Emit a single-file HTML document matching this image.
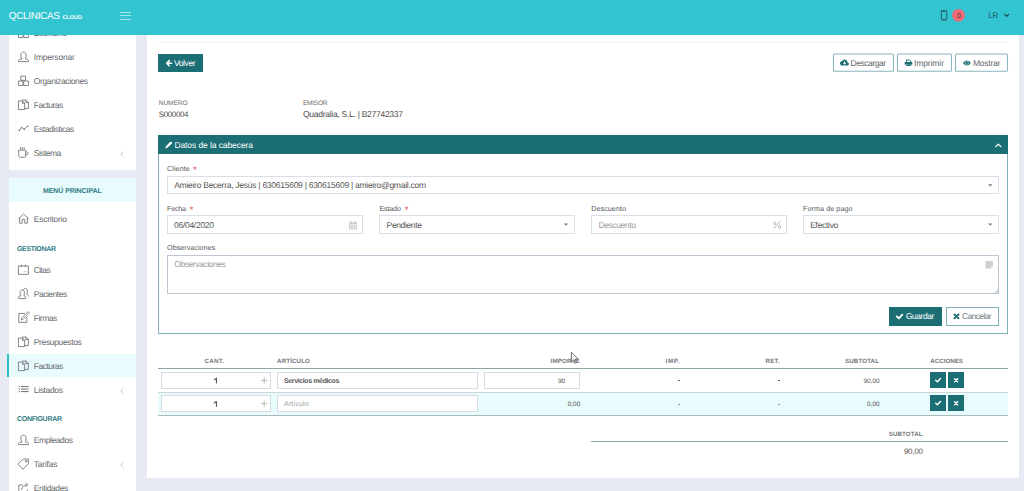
<!DOCTYPE html><html><head><meta charset="utf-8"><style>
html,body{margin:0;padding:0;width:1024px;height:491px;overflow:hidden;background:#e7eaf2;font-family:"Liberation Sans",sans-serif}
.t{position:absolute;line-height:1;white-space:nowrap;text-rendering:geometricPrecision}
.b{position:absolute;display:block}
</style></head><body>
<div class="b" style="left:147px;top:35px;width:872px;height:442.5px;background:#fff"></div>
<div class="b" style="left:9px;top:35px;width:127px;height:135px;background:#fff"></div>
<div class="b" style="left:9px;top:178px;width:127px;height:313px;background:#fff"></div>
<div class="b" style="left:9px;top:178px;width:127px;height:24px;background:#e8fbfd"></div>
<div class="b" style="left:9px;top:354px;width:127px;height:23px;background:#e8fbfd"></div>
<div class="b" style="left:7px;top:354px;width:2px;height:23px;background:#2fbfcc"></div>
<div class="t" style="left:33.75px;top:29.00px;font-size:8.5px;color:#66696d;letter-spacing:-0.242px;">Escritorio</div>
<div class="t" style="left:33.75px;top:53.00px;font-size:8.5px;color:#66696d;letter-spacing:-0.221px;">Impersonar</div>
<div class="t" style="left:33.75px;top:77.00px;font-size:8.5px;color:#66696d;letter-spacing:-0.370px;">Organizaciones</div>
<div class="t" style="left:33.75px;top:101.00px;font-size:8.5px;color:#66696d;letter-spacing:-0.509px;">Facturas</div>
<div class="t" style="left:33.75px;top:125.00px;font-size:8.5px;color:#66696d;letter-spacing:-0.441px;">Estadisticas</div>
<div class="t" style="left:33.75px;top:149.00px;font-size:8.5px;color:#66696d;letter-spacing:-0.535px;">Sistema</div>
<div class="t" style="left:33.75px;top:215.00px;font-size:8.5px;color:#66696d;letter-spacing:-0.242px;">Escritorio</div>
<div class="t" style="left:33.75px;top:266.00px;font-size:8.5px;color:#66696d;letter-spacing:-0.591px;">Citas</div>
<div class="t" style="left:33.75px;top:290.00px;font-size:8.5px;color:#66696d;letter-spacing:-0.479px;">Pacientes</div>
<div class="t" style="left:33.75px;top:314.00px;font-size:8.5px;color:#66696d;letter-spacing:-0.494px;">Firmas</div>
<div class="t" style="left:33.75px;top:338.00px;font-size:8.5px;color:#66696d;letter-spacing:-0.362px;">Presupuestos</div>
<div class="t" style="left:33.75px;top:362.00px;font-size:8.5px;color:#66696d;letter-spacing:-0.509px;">Facturas</div>
<div class="t" style="left:33.75px;top:386.00px;font-size:8.5px;color:#66696d;letter-spacing:-0.345px;">Listados</div>
<div class="t" style="left:33.75px;top:436.00px;font-size:8.5px;color:#66696d;letter-spacing:-0.409px;">Empleados</div>
<div class="t" style="left:33.75px;top:460.00px;font-size:8.5px;color:#66696d;letter-spacing:-0.214px;">Tarifas</div>
<div class="t" style="left:33.75px;top:484.00px;font-size:8.5px;color:#66696d;letter-spacing:-0.414px;">Entidades</div>
<div class="t" style="left:43.00px;top:188.00px;font-size:7px;color:#2c7a83;letter-spacing:-0.078px;font-weight:bold;-webkit-text-stroke:0;">MENÚ PRINCIPAL</div>
<div class="t" style="left:17.00px;top:246.00px;font-size:7px;color:#2c7a83;letter-spacing:-0.327px;font-weight:bold;-webkit-text-stroke:0;">GESTIONAR</div>
<div class="t" style="left:17.00px;top:416.00px;font-size:7px;color:#2c7a83;letter-spacing:-0.271px;font-weight:bold;-webkit-text-stroke:0;">CONFIGURAR</div>
<div class="b" style="left:0px;top:0px;width:1024px;height:35px;background:#33c4d2;z-index:5"></div>
<div class="t" style="left:8.75px;top:12.00px;font-size:10px;color:#fff;letter-spacing:-0.331px;z-index:6">QCLINICAS</div>
<div class="t" style="left:62.50px;top:16.00px;font-size:5.5px;color:#fff;letter-spacing:-0.013px;font-weight:bold;-webkit-text-stroke:0;z-index:6">CLOUD</div>
<div class="b" style="left:120px;top:11.5px;width:11px;height:1.0px;background:rgba(255,255,255,0.55);z-index:6"></div>
<div class="b" style="left:120px;top:15.0px;width:11px;height:1.0px;background:rgba(255,255,255,0.55);z-index:6"></div>
<div class="b" style="left:120px;top:18.5px;width:11px;height:1.0px;background:rgba(255,255,255,0.55);z-index:6"></div>
<div class="t" style="left:988.30px;top:12.00px;font-size:8px;color:#1f4d53;letter-spacing:0.000px;z-index:6">L</div>
<div class="t" style="left:992.60px;top:12.00px;font-size:8px;color:#1f4d53;letter-spacing:0.000px;z-index:6">R</div>
<div class="t" style="left:956.90px;top:13.00px;font-size:7px;color:#4b2d31;letter-spacing:0.000px;z-index:7">0</div>
<div class="b" style="left:158px;top:42px;width:850px;height:1px;background:#f0f2f5"></div>
<div class="b" style="left:158px;top:54px;width:45px;height:18px;background:#1c6e75"></div>
<div class="t" style="left:174.00px;top:59.00px;font-size:8.5px;color:#fff;letter-spacing:-0.404px;">Volver</div>
<svg class="b" style="left:0;top:0" width="1024" height="100" viewBox="0 0 1024 100"><rect x="833.5" y="54" width="60" height="17.3" rx="1" fill="none" stroke="#86b6ba" stroke-width="1.05"/><rect x="897.5" y="54" width="54" height="17.3" rx="1" fill="none" stroke="#86b6ba" stroke-width="1.05"/><rect x="955.5" y="54" width="52" height="17.3" rx="1" fill="none" stroke="#86b6ba" stroke-width="1.05"/></svg>
<div class="t" style="left:850.50px;top:59.00px;font-size:8.5px;color:#62666a;letter-spacing:-0.464px;">Descargar</div>
<div class="t" style="left:913.90px;top:59.00px;font-size:8.5px;color:#62666a;letter-spacing:-0.084px;">Imprimir</div>
<div class="t" style="left:972.90px;top:59.00px;font-size:8.5px;color:#62666a;letter-spacing:-0.218px;">Mostrar</div>
<div class="t" style="left:158.75px;top:101.00px;font-size:6.5px;color:#6c6c6c;letter-spacing:-0.027px;">NUMERO</div>
<div class="t" style="left:158.75px;top:111.00px;font-size:8px;color:#4e4e4e;letter-spacing:-0.380px;">S000004</div>
<div class="t" style="left:303.00px;top:101.00px;font-size:6.5px;color:#6c6c6c;letter-spacing:-0.228px;">EMISOR</div>
<div class="t" style="left:303.00px;top:110.00px;font-size:8.5px;color:#4e4e4e;letter-spacing:-0.274px;">Quadralia, S.L. | B27742337</div>
<div class="b" style="left:158px;top:135px;width:850px;height:199px;border:1px solid #7fb1b6;box-sizing:border-box;border-top:none"></div>
<div class="b" style="left:158px;top:135px;width:850px;height:19.30000000000001px;background:#1c6e75"></div>
<div class="t" style="left:174.40px;top:141.00px;font-size:8.5px;color:#fff;letter-spacing:-0.091px;">Datos de la cabecera</div>
<div class="t" style="left:167.10px;top:165.00px;font-size:7.2px;color:#555a5e;letter-spacing:0.039px;">Cliente</div>
<div class="t" style="left:193.00px;top:166.00px;font-size:9.5px;color:#e5484d;letter-spacing:0.000px;">*</div>
<div class="b" style="left:167px;top:175.5px;width:832px;height:18.5px;border:1px solid #d9dee8;box-sizing:border-box"></div>
<div class="t" style="left:174.20px;top:181.00px;font-size:8.5px;color:#555;letter-spacing:-0.264px;">Amieiro Becerra, Jesús | 630615609 | 630615609 | amieiro@gmail.com</div>
<div class="b" style="left:167px;top:215px;width:196px;height:18.5px;border:1px solid #d9dee8;box-sizing:border-box"></div>
<div class="b" style="left:379px;top:215px;width:196px;height:18.5px;border:1px solid #d9dee8;box-sizing:border-box"></div>
<div class="b" style="left:591px;top:215px;width:196px;height:18.5px;border:1px solid #d9dee8;box-sizing:border-box"></div>
<div class="b" style="left:803px;top:215px;width:196px;height:18.5px;border:1px solid #d9dee8;box-sizing:border-box"></div>
<div class="t" style="left:167.10px;top:205.00px;font-size:7.2px;color:#555a5e;letter-spacing:-0.279px;">Fecha</div>
<div class="t" style="left:189.75px;top:206.00px;font-size:9.5px;color:#e5484d;letter-spacing:0.000px;">*</div>
<div class="t" style="left:379.40px;top:205.00px;font-size:7.2px;color:#555a5e;letter-spacing:-0.163px;">Estado</div>
<div class="t" style="left:404.75px;top:206.00px;font-size:9.5px;color:#e5484d;letter-spacing:0.000px;">*</div>
<div class="t" style="left:591.30px;top:205.00px;font-size:7.2px;color:#555a5e;letter-spacing:0.035px;">Descuento</div>
<div class="t" style="left:803.00px;top:205.00px;font-size:7.2px;color:#555a5e;letter-spacing:0.064px;">Forma de pago</div>
<div class="t" style="left:174.00px;top:221.00px;font-size:8.5px;color:#555;letter-spacing:-0.282px;">06/04/2020</div>
<div class="t" style="left:386.60px;top:221.00px;font-size:8.5px;color:#555;letter-spacing:-0.373px;">Pendiente</div>
<div class="t" style="left:598.40px;top:221.00px;font-size:8.5px;color:#9a9a9a;letter-spacing:-0.392px;">Descuento</div>
<div class="t" style="left:810.25px;top:221.00px;font-size:8.5px;color:#555;letter-spacing:-0.312px;">Efectivo</div>
<div class="t" style="left:167.10px;top:244.00px;font-size:7.2px;color:#555a5e;letter-spacing:0.011px;">Observaciones</div>
<div class="b" style="left:167px;top:255px;width:832px;height:39px;border:1px solid #c0c7d4;box-sizing:border-box"></div>
<div class="t" style="left:174.25px;top:260.00px;font-size:8.5px;color:#9a9a9a;letter-spacing:-0.433px;">Observaciones</div>
<div class="b" style="left:889px;top:307px;width:53px;height:18.5px;background:#1c6e75"></div>
<div class="t" style="left:905.90px;top:312.00px;font-size:8.5px;color:#fff;letter-spacing:-0.446px;">Guardar</div>
<div class="b" style="left:946px;top:307px;width:53px;height:18.5px;border:1px solid #80b2b7;box-sizing:border-box"></div>
<div class="t" style="left:961.90px;top:312.00px;font-size:8.5px;color:#6f8186;letter-spacing:-0.617px;">Cancelar</div>
<div class="t" style="left:204.60px;top:359.00px;font-size:6.2px;color:#76797b;letter-spacing:0.287px;font-weight:bold;-webkit-text-stroke:0;">CANT.</div>
<div class="t" style="left:277.10px;top:359.00px;font-size:6.2px;color:#76797b;letter-spacing:0.124px;font-weight:bold;-webkit-text-stroke:0;">ARTÍCULO</div>
<div class="t" style="left:550.60px;top:359.00px;font-size:6.2px;color:#76797b;letter-spacing:0.150px;font-weight:bold;-webkit-text-stroke:0;">IMPORTE</div>
<div class="t" style="left:665.60px;top:359.00px;font-size:6.2px;color:#76797b;letter-spacing:0.618px;font-weight:bold;-webkit-text-stroke:0;">IMP.</div>
<div class="t" style="left:765.60px;top:359.00px;font-size:6.2px;color:#76797b;letter-spacing:0.122px;font-weight:bold;-webkit-text-stroke:0;">RET.</div>
<div class="t" style="left:845.00px;top:359.00px;font-size:6.2px;color:#76797b;letter-spacing:0.117px;font-weight:bold;-webkit-text-stroke:0;">SUBTOTAL</div>
<div class="t" style="left:930.25px;top:359.00px;font-size:6.2px;color:#76797b;letter-spacing:0.004px;font-weight:bold;-webkit-text-stroke:0;">ACCIONES</div>
<div class="b" style="left:158px;top:367.5px;width:850px;height:1.5px;background:#8fa5a6"></div>
<div class="b" style="left:161px;top:372px;width:110px;height:17px;border:1px solid #d6dbe4;box-sizing:border-box;background:#fff"></div>
<div class="b" style="left:277px;top:372px;width:201px;height:17px;border:1px solid #d6dbe4;box-sizing:border-box;background:#fff"></div>
<div class="b" style="left:484px;top:372px;width:96px;height:17px;border:1px solid #d6dbe4;box-sizing:border-box;background:#fff"></div>
<div class="b" style="left:158px;top:391.5px;width:850px;height:1.0px;background:#cfd6d6"></div>
<div class="b" style="left:158px;top:392.5px;width:850px;height:22.5px;background:#e8fcfd"></div>
<div class="b" style="left:158px;top:414.5px;width:850px;height:1.5px;background:#a9b9ba"></div>
<div class="b" style="left:161px;top:395px;width:110px;height:16.5px;border:1px solid #d6dbe4;box-sizing:border-box;background:#fff"></div>
<div class="b" style="left:277px;top:395px;width:201px;height:16.5px;border:1px solid #d6dbe4;box-sizing:border-box;background:#fff"></div>
<div class="t" style="left:284.00px;top:378.00px;font-size:7px;color:#5b5b5b;letter-spacing:-0.380px;font-weight:bold;-webkit-text-stroke:0;">Servicios médicos</div>
<div class="t" style="left:284.10px;top:400.00px;font-size:7.2px;color:#a0a0a0;letter-spacing:0.035px;">Artículo</div>
<div class="t" style="left:557.90px;top:379.00px;font-size:6.47px;color:#555;letter-spacing:0.000px;">90</div>
<div class="t" style="left:567.70px;top:402.00px;font-size:6.47px;color:#555;letter-spacing:0.000px;">0,00</div>
<div class="b" style="left:677.5px;top:380px;width:2.5px;height:1px;background:#666"></div>
<div class="b" style="left:777.5px;top:380px;width:2.5px;height:1px;background:#666"></div>
<div class="b" style="left:677.5px;top:403.5px;width:2.5px;height:1.0px;background:#8a8a8a"></div>
<div class="b" style="left:777.5px;top:403.5px;width:2.5px;height:1.0px;background:#8a8a8a"></div>
<div class="t" style="left:863.40px;top:379.00px;font-size:6.51px;color:#555;letter-spacing:0.000px;">90,00</div>
<div class="t" style="left:867.10px;top:402.00px;font-size:6.47px;color:#555;letter-spacing:0.000px;">0,00</div>
<div class="b" style="left:930px;top:372px;width:16px;height:16px;background:#1c6e75"></div>
<div class="b" style="left:948px;top:372px;width:16px;height:16px;background:#1c6e75"></div>
<div class="b" style="left:930px;top:395px;width:16px;height:16px;background:#1c6e75"></div>
<div class="b" style="left:948px;top:395px;width:16px;height:16px;background:#1c6e75"></div>
<div class="b" style="left:591px;top:440.5px;width:417px;height:1.5px;background:#8fa5a6"></div>
<div class="t" style="left:888.70px;top:432.00px;font-size:6.2px;color:#76797b;letter-spacing:0.103px;font-weight:bold;-webkit-text-stroke:0;">SUBTOTAL</div>
<div class="t" style="left:903.90px;top:448.00px;font-size:8px;color:#555;letter-spacing:-0.229px;">90,00</div>
<svg class="b" style="left:0;top:0;z-index:6" width="1024" height="40" viewBox="0 0 1024 40"><path d="M941.9 10.6h4.4c.3 0 .5.2.5.5v8.5c0 .3-.2.5-.5.5h-4.4c-.3 0-.5-.2-.5-.5v-8.5c0-.3.2-.5.5-.5z M943.3 11.3h1.6 M943.3 19.4h1.6" stroke="#1f4a50" stroke-width="0.8" fill="none" stroke-linejoin="round" stroke-linecap="round" /><circle cx="958.5" cy="15.3" r="6.3" fill="#ee6b76"/><path d="M1004.6 14.4L1006.6 16.4L1008.6 14.4" stroke="#1f4a50" stroke-width="1.2" fill="none" stroke-linejoin="round" stroke-linecap="round" /></svg>
<svg class="b" style="left:0;top:0" width="1024" height="491" viewBox="0 0 1024 491"><path d="M21.2 28.1h4.4v4.2h-4.4z M18.8 33h4.2v4.5h-4.2z M24.1 33h4.3v4.5h-4.3z" stroke="#75787c" stroke-width="0.9" fill="none" stroke-linejoin="round" stroke-linecap="round" /><path d="M21.7 58.7C21.1 57.9 20.9 56.5 20.9 55C20.9 53.2 22 52.1 23.5 52.1C25 52.1 26.1 53.2 26.1 55C26.1 56.5 25.9 57.9 25.3 58.7L27.8 59.5C28.3 59.7 28.5 60.1 28.5 60.6V61.6H18.5V60.6C18.5 60.1 18.7 59.7 19.2 59.5Z" stroke="#75787c" stroke-width="0.9" fill="none" stroke-linejoin="round" stroke-linecap="round" /><path d="M21.2 76.1h4.4v4.2h-4.4z M18.8 81h4.2v4.5h-4.2z M24.1 81h4.3v4.5h-4.3z" stroke="#75787c" stroke-width="0.9" fill="none" stroke-linejoin="round" stroke-linecap="round" /><path d="M18.8 101h3.6l2.3 2.3v6.3h-5.9z M22.4 101v2.3h2.3" stroke="#75787c" stroke-width="0.9" fill="none" stroke-linejoin="round" stroke-linecap="round" /><path d="M22.3 100.1h3.6l2.5 2.4v6h-3.6 M25.9 100.1v2.4h2.5" stroke="#75787c" stroke-width="0.9" fill="none" stroke-linejoin="round" stroke-linecap="round" /><path d="M19.3 130.4L21.5 127.5L24.4 129.2L27.6 126.3" stroke="#75787c" stroke-width="0.9" fill="none" stroke-linejoin="round" stroke-linecap="round" /><circle cx="19.3" cy="130.4" r="0.8" fill="#75787c"/><circle cx="21.5" cy="127.5" r="0.8" fill="#75787c"/><circle cx="24.4" cy="129.2" r="0.8" fill="#75787c"/><circle cx="27.6" cy="126.3" r="0.8" fill="#75787c"/><path d="M18.9 150.2h6.8v5.9c0 .7-.5 1.2-1.2 1.2h-4.4c-.7 0-1.2-.5-1.2-1.2z M25.7 152h.6c1.1 0 2 .6 2 1.3s-.9 1.3-2 1.3h-.6" stroke="#75787c" stroke-width="0.9" fill="none" stroke-linejoin="round" stroke-linecap="round" /><path d="M20.6 147.6v1.6 M22.4 147.6v1.6 M24.2 147.6v1.6" stroke="#75787c" stroke-width="0.9" fill="none" stroke-linejoin="round" stroke-linecap="round" /><path d="M18.8 218.5L23.6 214.1L28.3 218.5 M19.6 217.8v5.4h2.6v-3.8h2.6v3.8h2.6v-5.4" stroke="#75787c" stroke-width="0.9" fill="none" stroke-linejoin="round" stroke-linecap="round" /><path d="M18.8 266h9.6v8.3h-9.6z M21.5 265.2v1.4 M25.4 265.2v1.4" stroke="#75787c" stroke-width="0.9" fill="none" stroke-linejoin="round" stroke-linecap="round" /><rect x="24.6" y="271" width="1.2" height="1.2" fill="#9bb"/><path d="M23.7 289.6C24.1 288.7 24.8 288.3 25.6 288.3C26.8 288.3 27.4 289.4 27.4 291C27.4 292.4 27.2 293.6 26.7 294.3L27.9 295.1C28.3 295.4 28.5 295.7 28.5 296.1" stroke="#75787c" stroke-width="0.9" fill="none" stroke-linejoin="round" stroke-linecap="round" /><path d="M20.6 295.7C20.2 295 20.1 293.8 20.1 292.5C20.1 290.9 21 289.9 22.25 289.9C23.5 289.9 24.4 290.9 24.4 292.5C24.4 293.8 24.3 295 23.9 295.7L25.3 296.4C25.7 296.6 25.8 297 25.8 297.4V298.6H18.5V297.4C18.5 297 18.6 296.6 19 296.4Z" stroke="#75787c" stroke-width="0.9" fill="none" stroke-linejoin="round" stroke-linecap="round" /><path d="M24.6 313.4h-5.8v9h8v-5.2" stroke="#75787c" stroke-width="0.9" fill="none" stroke-linejoin="round" stroke-linecap="round" /><path d="M21.4 319.7l.5-1.9 5.7-5.7c.4-.4.9-.4 1.3 0s.4.9 0 1.3l-5.7 5.7z" stroke="#75787c" stroke-width="0.9" fill="none" stroke-linejoin="round" stroke-linecap="round" /><path d="M18.8 338h3.6l2.3 2.3v6.3h-5.9z M22.4 338v2.3h2.3" stroke="#75787c" stroke-width="0.9" fill="none" stroke-linejoin="round" stroke-linecap="round" /><path d="M22.3 337.1h3.6l2.5 2.4v6h-3.6 M25.9 337.1v2.4h2.5" stroke="#75787c" stroke-width="0.9" fill="none" stroke-linejoin="round" stroke-linecap="round" /><path d="M18.8 362h3.6l2.3 2.3v6.3h-5.9z M22.4 362v2.3h2.3" stroke="#75787c" stroke-width="0.9" fill="none" stroke-linejoin="round" stroke-linecap="round" /><path d="M22.3 361.1h3.6l2.5 2.4v6h-3.6 M25.9 361.1v2.4h2.5" stroke="#75787c" stroke-width="0.9" fill="none" stroke-linejoin="round" stroke-linecap="round" /><rect x="18.7" y="386.05" width="1.1" height="1.1" fill="#5f6266"/><path d="M21.4 386.6H28.2" stroke="#6a6d71" stroke-width="1.0" fill="none" stroke-linejoin="round" stroke-linecap="round" stroke-linecap="butt"/><rect x="18.7" y="388.55" width="1.1" height="1.1" fill="#5f6266"/><path d="M21.4 389.1H28.2" stroke="#6a6d71" stroke-width="1.0" fill="none" stroke-linejoin="round" stroke-linecap="round" stroke-linecap="butt"/><rect x="18.7" y="391.05" width="1.1" height="1.1" fill="#5f6266"/><path d="M21.4 391.6H28.2" stroke="#6a6d71" stroke-width="1.0" fill="none" stroke-linejoin="round" stroke-linecap="round" stroke-linecap="butt"/><path d="M21.7 441.7C21.1 440.9 20.9 439.5 20.9 438C20.9 436.2 22 435.1 23.5 435.1C25 435.1 26.1 436.2 26.1 438C26.1 439.5 25.9 440.9 25.3 441.7L27.8 442.5C28.3 442.7 28.5 443.1 28.5 443.6V444.6H18.5V443.6C18.5 443.1 18.7 442.7 19.2 442.5Z" stroke="#75787c" stroke-width="0.9" fill="none" stroke-linejoin="round" stroke-linecap="round" /><path d="M23.6 459H28.4V463.8L22.9 469.2L18.2 464.5Z" stroke="#75787c" stroke-width="0.9" fill="none" stroke-linejoin="round" stroke-linecap="round" /><circle cx="26.2" cy="461.2" r="0.9" fill="none" stroke="#75787c" stroke-width="0.9"/><path d="M22.5 485h-3.7v8.5h8.5v-3.5" stroke="#75787c" stroke-width="0.9" fill="none" stroke-linejoin="round" stroke-linecap="round" /><path d="M21.5 489.5c.6-2.5 2.3-4.5 5.5-4.6 M25.8 483l1.9 1.9-1.9 1.9" stroke="#75787c" stroke-width="0.9" fill="none" stroke-linejoin="round" stroke-linecap="round" /><path d="M123 151.7L120.8 154L123 156.3" stroke="#b5b8bd" stroke-width="0.8" fill="none" stroke-linejoin="round" stroke-linecap="round" /><path d="M123 388.7L120.8 391L123 393.3" stroke="#b5b8bd" stroke-width="0.8" fill="none" stroke-linejoin="round" stroke-linecap="round" /><path d="M123 462.7L120.8 465L123 467.3" stroke="#b5b8bd" stroke-width="0.8" fill="none" stroke-linejoin="round" stroke-linecap="round" /><path d="M171.6 63.2H167.4 M169.3 60.6L166.7 63.2L169.3 65.8" stroke="#fff" stroke-width="1.6" fill="none" stroke-linejoin="round" stroke-linecap="round" /><path d="M842 65.6h5.2c.9 0 1.6-.8 1.6-1.7 0-.9-.6-1.6-1.4-1.7.0-1.5-1.2-2.7-2.7-2.7-1.1 0-2.1.7-2.5 1.6-1.2.1-2.2 1.1-2.2 2.3 0 1.2 1 2.2 2 2.2z" fill="#1f6f75" /><path d="M844.1 61.2h1v1.8h1.2l-1.7 1.8-1.7-1.8h1.2z" fill="#fff" /><path d="M906.5 61.8V60h3.4l.9.9v.9" stroke="#1f6f75" stroke-width="0.9" fill="none" stroke-linejoin="round" stroke-linecap="round" /><path d="M904.7 61.9h7.6v2.9h-1.2v-.9h-5.2v.9h-1.2z M906.2 64.3h4.9v1.6h-4.9z" fill="#1f6f75" /><path d="M963.1 62.9c.9-1.5 2.3-2.5 3.85-2.5s2.95 1 3.85 2.5c-.9 1.5-2.3 2.5-3.85 2.5s-2.95-1-3.85-2.5z" fill="#1f6f75" /><circle cx="966.95" cy="62.9" r="1.7" fill="#d8e8ea"/><circle cx="966.95" cy="62.9" r="1.15" fill="#1f6f75"/><path d="M167.4 146.3L170.9 142.9" stroke="#fff" stroke-width="2.3" fill="none" stroke-linejoin="round" stroke-linecap="round" /><path d="M165.2 148.5l.7-2.6 1.9 1.9z" fill="#fff" /><path d="M995.8 146.6L998.3 144.1L1000.8 146.6" stroke="#fff" stroke-width="1.3" fill="none" stroke-linejoin="round" stroke-linecap="round" /><path d="M349 222.3h8v7.3h-8z" fill="#d0d0d0" /><path d="M350 224h1.5v1.4h-1.5z M352.3 224h1.5v1.4h-1.5z M354.6 224h1.5v1.4h-1.5z M350 226.2h1.5v1.4h-1.5z M352.3 226.2h1.5v1.4h-1.5z M354.6 226.2h1.5v1.4h-1.5z M350 228.3h1.5v.8h-1.5z M352.3 228.3h1.5v.8h-1.5z M354.6 228.3h1.5v.8h-1.5z" fill="#f4f4f4"/><path d="M350.6 221.1h1v1.6h-1z M354.6 221.1h1v1.6h-1z" fill="#c4c4c4" /><path d="M988.1999999999999 184.3h4.2l-2.1 2.1z" fill="#777" /><path d="M563.9 223.6h4.2l-2.1 2.1z" fill="#777" /><path d="M988.1999999999999 223.6h4.2l-2.1 2.1z" fill="#777" /><path d="M261.5 380.4h5.4 M264.2 377.79999999999995v5.2" stroke="#c6c6c6" stroke-width="1.3" fill="none" stroke-linejoin="round" stroke-linecap="round" stroke-linecap="butt"/><path d="M261.5 403.7h5.4 M264.2 401.09999999999997v5.2" stroke="#c6c6c6" stroke-width="1.3" fill="none" stroke-linejoin="round" stroke-linecap="round" stroke-linecap="butt"/><path d="M985.5 261h7.4v5.6l-2 2h-5.4z" fill="#cfcfcf" /><path d="M990.9 268.6v-2h2z" fill="#eee" /><path d="M994.5 293L998.5 289 M996.5 293L998.5 291" stroke="#9aa" stroke-width="0.7" fill="none" stroke-linejoin="round" stroke-linecap="round" /><path d="M896.7 316.4L898.9 318.4L902.3 314.7" stroke="#fff" stroke-width="1.9" fill="none" stroke-linejoin="round" stroke-linecap="round" /><path d="M954.5 314.5L958.5 318.3 M958.5 314.5L954.5 318.3" stroke="#1f6f75" stroke-width="1.9" fill="none" stroke-linejoin="round" stroke-linecap="round" stroke-linecap="butt"/><path d="M935.7 380.2L937.4 381.8L940.5 378.6" stroke="#fff" stroke-width="1.5" fill="none" stroke-linejoin="round" stroke-linecap="round" /><path d="M954.7 378.7L957.6 381.8 M957.6 378.7L954.7 381.8" stroke="#fff" stroke-width="1.5" fill="none" stroke-linejoin="round" stroke-linecap="round" /><path d="M935.7 403.2L937.4 404.8L940.5 401.6" stroke="#fff" stroke-width="1.5" fill="none" stroke-linejoin="round" stroke-linecap="round" /><path d="M954.7 401.7L957.6 404.8 M957.6 401.7L954.7 404.8" stroke="#fff" stroke-width="1.5" fill="none" stroke-linejoin="round" stroke-linecap="round" /><path d="M216.4 383V378.1L214.3 379.7" stroke="#4a4a4a" stroke-width="1.05" fill="none" stroke-linejoin="round" stroke-linecap="round" stroke-linecap="butt" stroke-linejoin="miter"/><path d="M216.4 406.3V401.40000000000003L214.3 403.0" stroke="#4a4a4a" stroke-width="1.05" fill="none" stroke-linejoin="round" stroke-linecap="round" stroke-linecap="butt" stroke-linejoin="miter"/><ellipse cx="774.8" cy="223.3" rx="1.1" ry="1.3" fill="none" stroke="#b2b2b2" stroke-width="0.95"/><ellipse cx="779.6" cy="226.9" rx="1.1" ry="1.3" fill="none" stroke="#b2b2b2" stroke-width="0.95"/><path d="M780.2 221.6L774 228.6" stroke="#b2b2b2" stroke-width="1.0" fill="none" stroke-linejoin="round" stroke-linecap="round" /><path d="M571.4 352.2V362L573.7 359.8L575.3 363.3L576.5 362.7L575 359.2H578.2Z" fill="#fff" stroke="#606060" stroke-width="0.9" stroke-linejoin="round"/></svg>
</body></html>
